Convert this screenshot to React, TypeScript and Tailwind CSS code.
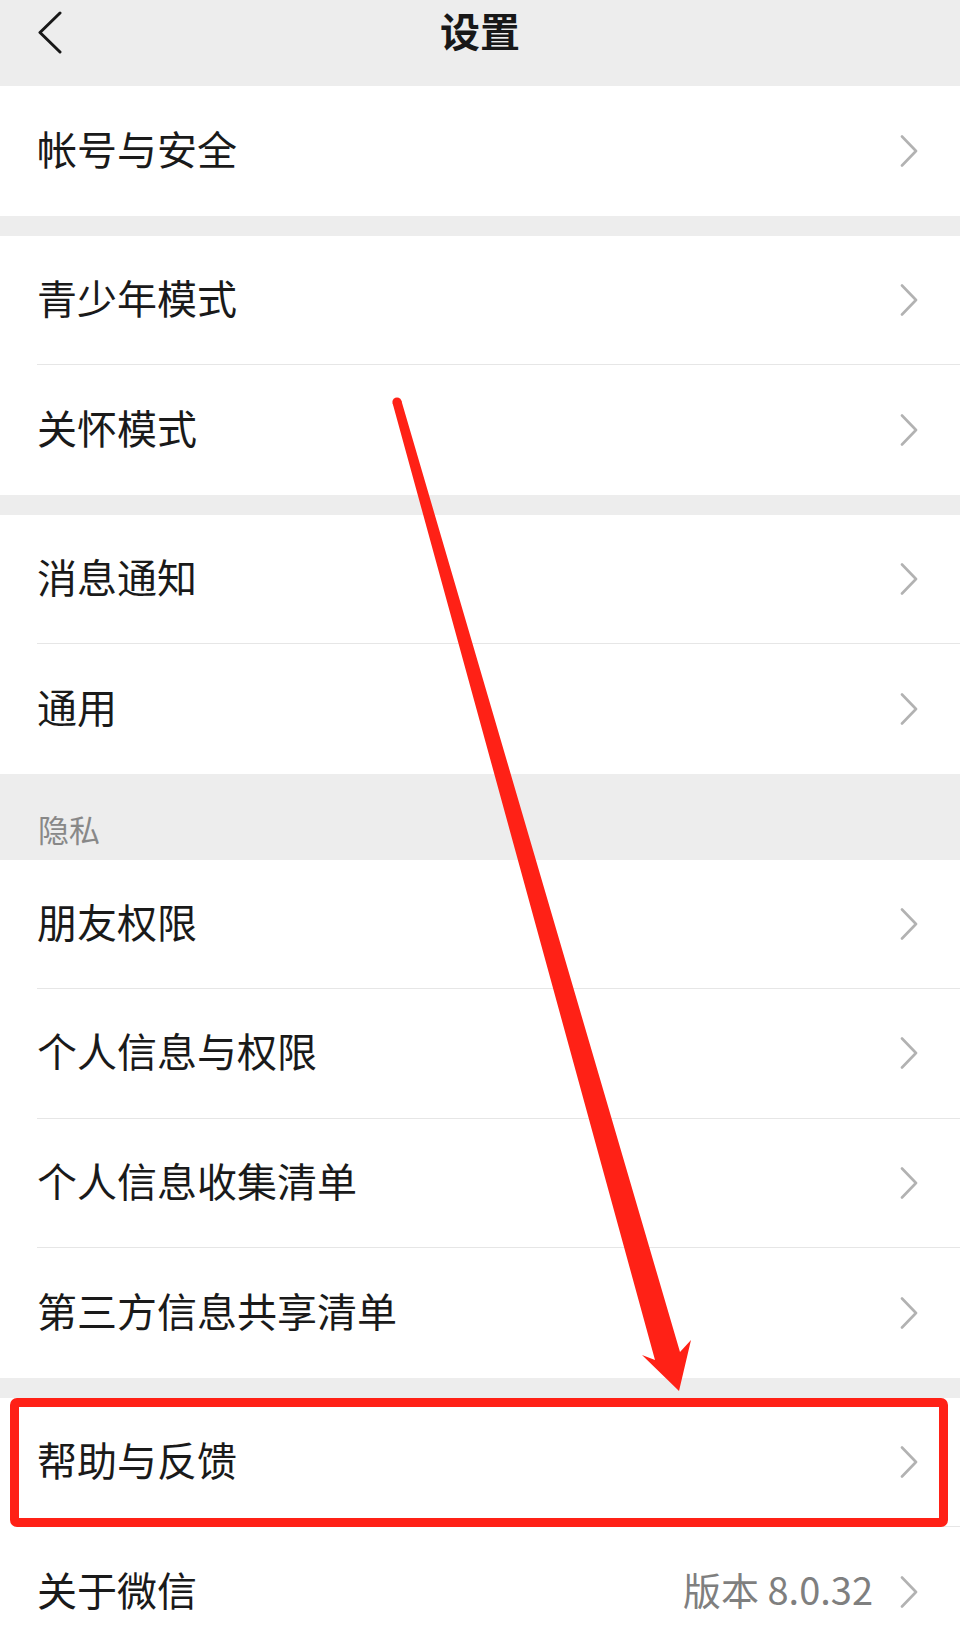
import React from 'react';

type RowProps = {
  label: string;
  value?: string;
  last?: boolean;
  highlight?: boolean;
};

const Chevron = () => (
  <svg width="18" height="32" viewBox="0 0 18 32" className="shrink-0">
    <polyline points="2,1.5 16,16 2,30.5" fill="none" stroke="#b2b2b2" strokeWidth="2.6" strokeLinecap="round" strokeLinejoin="round" />
  </svg>
);

const Row: React.FC<RowProps> = ({ label, value, last, highlight }) => (
  <div className="relative h-[129.5px] bg-white pl-[37px] flex">
    <div className={`flex-1 flex items-center pr-[42px] ${last ? '' : 'border-b border-[#e6e6e6]'}`}>
      <span className="flex-1 pb-[6px] text-[40px] leading-none text-[#1a1a1a]">{label}</span>
      {value && <span className="pb-[6px] text-[38px] leading-none text-[#7f7f7f] mr-[27px]">{value}</span>}
      <Chevron />
    </div>
    {highlight && (
      <div className="absolute left-[10px] right-[12px] top-0 bottom-0 border-[9px] border-[#ff2116] rounded-[7px]" />
    )}
  </div>
);

const Gap = () => <div className="h-[20px] bg-[#ededed]" />;

export default function App() {
  return (
    <div className="relative w-[960px] h-[1642px] overflow-hidden bg-[#ededed] font-['Noto_Sans_CJK_SC','Noto_Sans',sans-serif]">
      {/* top bar */}
      <div className="h-[86px] bg-[#ededed]">
        <div className="relative h-[66px] flex items-center justify-center">
          <svg width="26" height="44" viewBox="0 0 26 44" className="absolute left-[37px] top-[10px]">
            <polyline points="23,3 3,22.5 23,42" fill="none" stroke="#181818" strokeWidth="3" strokeLinecap="round" strokeLinejoin="round" />
          </svg>
          <span className="pb-[6px] text-[40px] leading-none font-semibold text-[#181818]">设置</span>
        </div>
      </div>

      <Row label="帐号与安全" last />
      <Gap />
      <Row label="青少年模式" />
      <Row label="关怀模式" last />
      <Gap />
      <Row label="消息通知" />
      <Row label="通用" last />

      <div className="h-[86px] bg-[#ededed] flex items-end pl-[38px] pb-[15px]">
        <span className="text-[31px] leading-[32px] text-[#888888]">隐私</span>
      </div>
      <Row label="朋友权限" />
      <Row label="个人信息与权限" />
      <Row label="个人信息收集清单" />
      <Row label="第三方信息共享清单" last />
      <Gap />
      <Row label="帮助与反馈" highlight />
      <Row label="关于微信" value="版本 8.0.32" last />

      {/* annotation arrow */}
      <svg className="absolute inset-0 pointer-events-none" width="960" height="1642" viewBox="0 0 960 1642">
        <circle cx="397" cy="402" r="4.6" fill="#ff2116" />
        <polygon
          fill="#ff2116"
          points="401.4,400.8 680,1352 691,1340 679,1391 642,1355 655,1360 392.6,403.2"
        />
      </svg>
    </div>
  );
}
